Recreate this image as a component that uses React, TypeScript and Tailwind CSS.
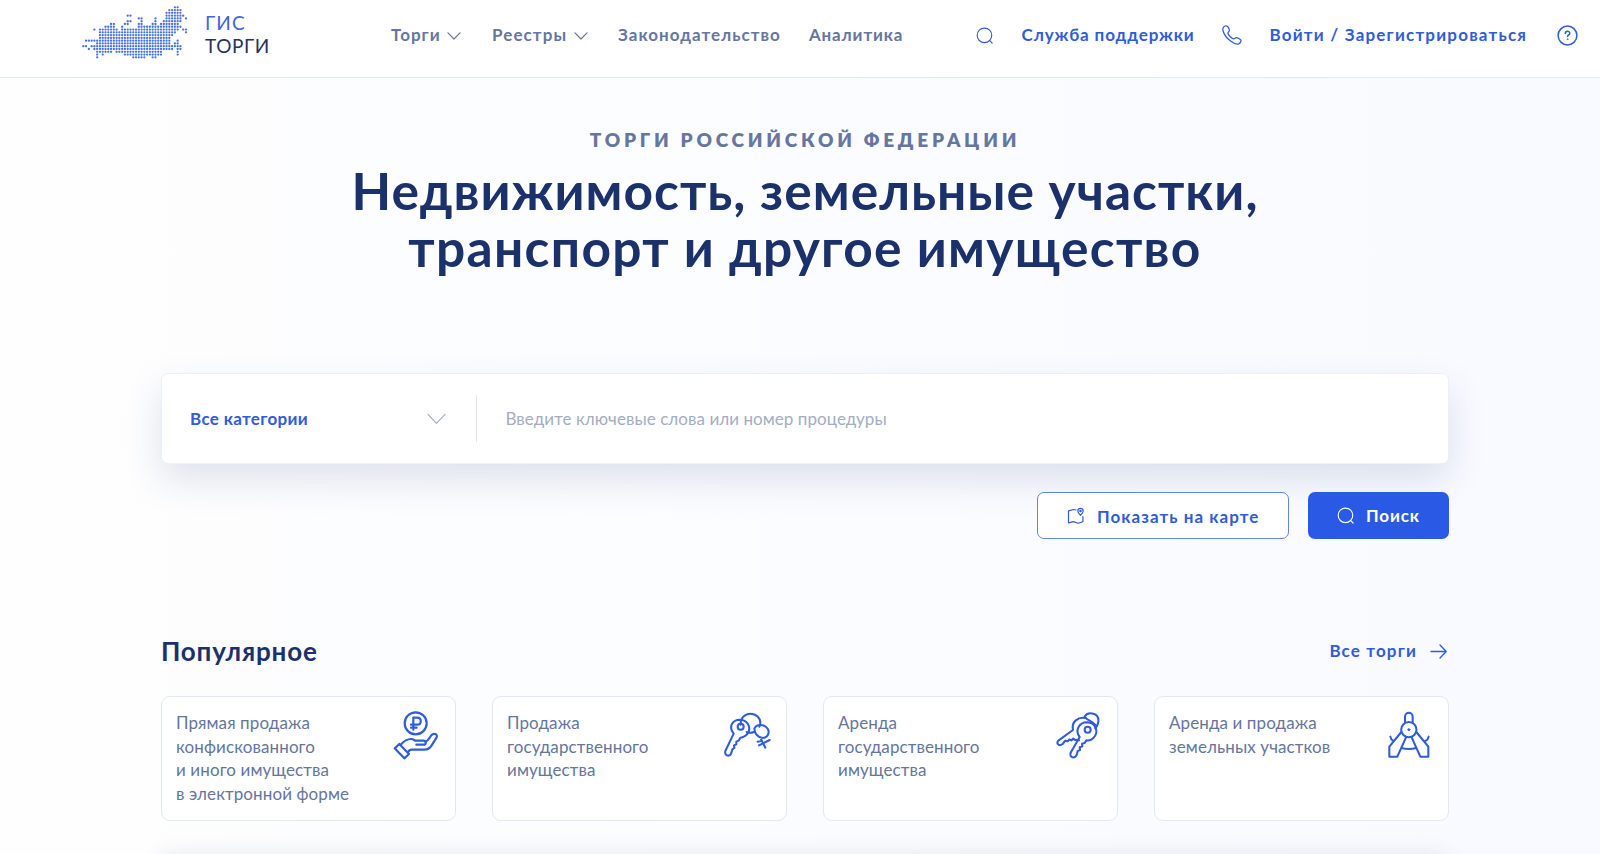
import type { ReactNode } from "react";

const mapRows: [number, number][][] = [
  [[33, 34]],
  [[31, 35]],
  [[30, 35]],
  [[16, 17], [30, 36]],
  [[20, 21], [26, 26], [30, 35], [37, 37]],
  [[16, 17], [21, 21], [26, 26], [29, 35]],
  [[10, 11], [15, 16], [20, 21], [25, 26], [28, 34]],
  [[8, 11], [14, 14], [20, 35]],
  [[4, 4], [6, 12], [14, 34], [36, 37]],
  [[6, 33], [37, 37]],
  [[6, 32]],
  [[6, 31]],
  [[1, 4], [5, 31], [34, 34]],
  [[5, 31], [33, 34]],
  [[0, 1], [3, 35]],
  [[2, 2], [4, 32], [34, 35]],
  [[5, 10], [12, 28], [34, 34]],
  [[5, 5], [7, 7], [15, 28], [34, 34]],
  [[5, 5], [18, 22], [25, 26]],
];

function MapLogo() {
  return (
    <svg className="h-[54px] w-[108px] shrink-0" viewBox="0 0 108 54" fill="#4a6fe0">
      {mapRows.map((ranges, r) =>
        ranges.map(([a, b]) =>
          Array.from({ length: b - a + 1 }, (_, i) => (
            <circle key={`${r}-${a + i}`} cx={2.3 + (a + i) * 2.775} cy={2.3 + r * 2.78} r={1.15} />
          )),
        ),
      )}
    </svg>
  );
}

function Chevron({ className }: { className: string }) {
  return (
    <svg className={className} viewBox="0 0 20 12" fill="none" stroke="currentColor" strokeLinecap="round" strokeLinejoin="round">
      <path d="M1 1.2 10 10.5 19 1.2" />
    </svg>
  );
}

function SearchIcon({ className }: { className: string }) {
  return (
    <svg className={className} viewBox="0 0 18 18" fill="none" stroke="currentColor" strokeWidth="1.15" strokeLinecap="round">
      <circle cx="8.7" cy="8.6" r="7.5" />
      <path d="m14.2 14 2.4 2.6" />
    </svg>
  );
}

function PhoneIcon() {
  return (
    <svg className="h-[20px] w-[20px]" viewBox="0 0 20 20" fill="none" stroke="currentColor" strokeWidth="1.25" strokeLinejoin="round">
      <path d="M1.2 2.7C2 1.2 4.2.2 5.4 1.2c1 .9 1.8 2.6 2 3.9.2 1.5-1.7 1.9-1.5 3.1.3 1.7 3.7 5.3 5.6 5.7 1.2.2 1.8-1.5 3.2-1.3 1.2.2 3.3 1.3 4 2.3.8 1.3-.5 3.2-1.9 3.9-2 .8-5.6-.7-8.2-2.7C5.2 13.5 2 9.4 1.1 6 .8 4.900.7 3.6 1.200 2.700Z" />
    </svg>
  );
}

function HelpIcon() {
  return (
    <svg className="h-[21px] w-[21px]" viewBox="0 0 21 21" fill="none" stroke="currentColor" strokeWidth="1.5" strokeLinecap="round">
      <circle cx="10.5" cy="10.5" r="9.4" />
      <path d="M8.3 8.5c0-3 4.5-2.9 4.5-.2 0 1.6-2.2 1.7-2.2 3.3" />
      <circle cx="10.6" cy="14.2" r=".4" fill="currentColor" strokeWidth="0.7" />
    </svg>
  );
}

function MapPinIcon() {
  return (
    <svg className="h-[18px] w-[18px]" viewBox="0 0 18 18" fill="none" stroke="currentColor" strokeWidth="1.2" strokeLinecap="round" strokeLinejoin="round">
      <path d="M9 3 6.3 2.5 1.5 3.8v12l4.7-1.2 5 1.7 4.7-1.5V9.5" />
      <path d="M13.5 8.4C11.7 6.5 10.8 5.2 10.8 4a2.7 2.7 0 0 1 5.4 0c0 1.2-.9 2.5-2.7 4.400Z" />
      <circle cx="13.5" cy="4" r=".7" />
    </svg>
  );
}

function HandCoinIcon() {
  return (
    <svg className="h-[50px] w-[47px]" viewBox="40 45 141 150" fill="none" stroke="currentColor" strokeWidth="6.5" strokeLinecap="round" strokeLinejoin="round">
      <circle cx="108" cy="85" r="33" />
      <path d="M101 104V68h11c15 0 15 21 0 21H94M94 98h17" />
      <path d="m45 160 14-13 29 30-14 13z" />
      <path d="M63 149c10-11 19-17 31-17 8 0 10 5 15 5h22c10 0 10 12 0 12h-21M137 141c8-3 12-12 18-20 7-8 20-4 16 6l-15 24c-6 10-13 13-23 13h-37c-5 0-9 4-11 8" />
    </svg>
  );
}

function KeyRingIcon() {
  return (
    <svg className="h-[48px] w-[48px]" viewBox="69 95 144 144" fill="none" stroke="currentColor" strokeWidth="6.2" strokeLinecap="round" strokeLinejoin="round">
      <path d="M119 136c-2-18 12-33 29-33s31 13 30 29c0 4-1 7-3 10M158 158c-7 3-14 3-21 0" />
      <path d="M98 163c-14-16-9-42 20-42 29 2 35 35 14 49-6 4-11 5-14 5l-5 9-7 3v8l-7 3 1 8-6 4-2 7c-3 18-23 14-19-2z" />
      <circle cx="119" cy="142" r="9" />
      <path d="M160 148c3-7 10-11 18-11 14 0 24 9 25 20 0 11-8 19-18 19-14-2-24-13-25-28ZM177 174l16 31M170 187l12-3M174 198l32-16" />
    </svg>
  );
}

function TwoKeysIcon() {
  return (
    <svg className="h-[48px] w-[47px]" viewBox="74 63 141 144" fill="none" stroke="currentColor" strokeWidth="6.2" strokeLinecap="round" strokeLinejoin="round">
      <path d="M163 79c12-16 44-10 41 16-1 9-4 15-9 20M166 84c9 8 20 10 29 21" />
      <path d="M146 151c-7-1-9-2-12-1l-5-4-6 5-6-3-5 6-7-2-8 10c-13 9-21-4-12-11l43-31c-6-24 16-41 38-36" />
      <path d="M148 141c-15-19-2-44 22-44 27 1 36 29 20 46-7 7-14 10-22 8l-5 8-8 2 1 8-8 3 1 8-7 3-2 9c-4 17-25 11-19-4z" />
      <circle cx="172" cy="119" r="9" />
    </svg>
  );
}

function CompassIcon() {
  return (
    <svg className="h-[48px] w-[44px]" viewBox="260 245 132 144" fill="none" stroke="currentColor" strokeWidth="6.2" strokeLinecap="round" strokeLinejoin="round">
      <path d="M314 279v-17a11.5 11.5 0 0 1 23 0v17" />
      <circle cx="325.5" cy="301" r="23" />
      <circle cx="325.5" cy="301" r="3" fill="currentColor" strokeWidth="3" />
      <path d="m303 308-36 44v30h24l26-58M348 308l36 44v30h-24l-26-58M303 356c15 4 30 4 45 0M270 322c1 6 4 10 9 12M385 322c-1 6-4 10-9 12" />
    </svg>
  );
}

function Card({ lines, icon, iconBox }: { lines: string[]; icon: ReactNode; iconBox: string }) {
  return (
    <div className="flex h-[125px] w-[295px] justify-between rounded-[9px] border border-[#e3e7f1] bg-white pt-[14px] pl-[14px]">
      <div className="text-[17px] leading-[23.7px] tracking-[0.1px] whitespace-nowrap text-[#65759d]">
        {lines.map((l) => (
          <div key={l}>{l}</div>
        ))}
      </div>
      <div className={iconBox}>{icon}</div>
    </div>
  );
}

export default function App() {
  return (
    <div className="h-[854px] w-[1600px] overflow-hidden bg-gradient-to-r from-[#fefefe] via-[#fbfcff] to-[#f8faff] font-[Lato,'Open_Sans',sans-serif] text-[#2f5cd8]">
      <header className="h-[78px] border-b border-[#e2e7f0] bg-white">
        <div className="flex h-[70px] items-center pl-[81px] text-[17px] font-bold whitespace-nowrap">
          <div className="flex w-[310px] shrink-0 items-center">
            <div className="-mt-[6px]">
              <MapLogo />
            </div>
            <div className="-mt-px ml-[16px] text-[19px] leading-[22.7px] font-normal">
              <div className="tracking-[1.1px] text-[#3c66e0]">ГИС</div>
              <div className="tracking-[0.6px] text-[#26325f]">ТОРГИ</div>
            </div>
          </div>
          <nav className="flex shrink-0 items-center text-[#66769f]">
            <div className="flex w-[101px] items-center">
              <span className="w-[55.5px] tracking-[1px]">Торги</span>
              <Chevron className="mt-[2px] h-[8px] w-[14px] stroke-[1.8]" />
            </div>
            <div className="flex w-[126px] items-center">
              <span className="w-[81.5px] tracking-[1.1px]">Реестры</span>
              <Chevron className="mt-[2px] h-[8px] w-[14px] stroke-[1.8]" />
            </div>
            <span className="w-[191px] tracking-[1px]">Законодательство</span>
            <span className="w-[166.5px] tracking-[0.85px]">Аналитика</span>
          </nav>
          <div className="flex shrink-0 items-center">
            <div className="w-[46px]">
              <SearchIcon className="mt-px h-[17.5px] w-[17.5px]" />
            </div>
            <span className="w-[200.5px] tracking-[0.88px]">Служба поддержки</span>
            <div className="w-[47.5px]">
              <PhoneIcon />
            </div>
            <span className="w-[287.5px] tracking-[1.2px]">Войти / Зарегистрироваться</span>
            <HelpIcon />
          </div>
        </div>
      </header>

      <main className="ml-[161px] w-[1288px] pt-[48px]">
        <div className="text-center text-[19px] leading-[28px] font-extrabold tracking-[3.75px] text-[#66779f]">
          ТОРГИ РОССИЙСКОЙ ФЕДЕРАЦИИ
        </div>
        <h1 className="mt-[8px] text-center text-[51.5px] leading-[57px] font-bold text-[#1b316b]">
          <span className="block tracking-[1.02px]">Недвижимость, земельные участки,</span>
          <span className="block tracking-[1.3px]">транспорт и другое имущество</span>
        </h1>

        <div className="mt-[97px] flex h-[91px] items-center rounded-[7px] border border-[#eceff5] bg-white text-[17px] shadow-[0_16px_36px_rgba(50,75,130,0.15)]">
          <div className="flex h-[47px] w-[315px] items-center justify-between border-r border-[#e2e5ec] pr-[30px] pl-[28px]">
            <span className="font-bold tracking-[0.33px]">Все категории</span>
            <Chevron className="h-[12px] w-[19px] stroke-[1.2] text-[#a3adc4]" />
          </div>
          <span className="pl-[28.5px] tracking-[0.05px] text-[#a3adc4]">Введите ключевые слова или номер процедуры</span>
        </div>

        <div className="mt-[28px] flex justify-end gap-[19px] text-[17px] font-bold">
          <button className="flex h-[47px] w-[252px] items-center rounded-[7px] border-[1.5px] border-[#6285e4] bg-white pl-[29px]">
            <MapPinIcon />
            <span className="mt-[2px] ml-[12px] tracking-[1.05px]">Показать на карте</span>
          </button>
          <button className="flex h-[47px] w-[141px] items-center rounded-[7px] bg-[#2a5ae5] pl-[29px] text-white">
            <SearchIcon className="h-[17.5px] w-[17.5px]" />
            <span className="ml-[11.5px] tracking-[0.85px]">Поиск</span>
          </button>
        </div>

        <div className="mt-[94px] flex h-[36px] items-center justify-between pr-[2px]">
          <h2 className="text-[26px] leading-[36px] font-bold tracking-[0.85px] text-[#1b316b]">Популярное</h2>
          <a className="flex items-center text-[17px] font-bold">
            <span className="tracking-[1.15px]">Все торги</span>
            <svg className="ml-[13px] h-[15px] w-[17px]" viewBox="0 0 17 15" fill="none" stroke="currentColor" strokeWidth="1.3" strokeLinecap="round" strokeLinejoin="round">
              <path d="M1 7.5h15M10 1l6.2 6.5L10 14" />
            </svg>
          </a>
        </div>

        <div className="mt-[27px] flex justify-between">
          <Card
            lines={["Прямая продажа", "конфискованного", "и иного имущества", "в электронной форме"]}
            icon={<HandCoinIcon />}
            iconBox="-mt-px mr-[15px]"
          />
          <Card lines={["Продажа", "государственного", "имущества"]} icon={<KeyRingIcon />} iconBox="mr-[14px]" />
          <Card lines={["Аренда", "государственного", "имущества"]} icon={<TwoKeysIcon />} iconBox="mr-[15px]" />
          <Card lines={["Аренда и продажа", "земельных участков"]} icon={<CompassIcon />} iconBox="mr-[17px]" />
        </div>

        <div className="mt-[37px] h-[60px] rounded-[9px] bg-white shadow-[0_0_24px_rgba(40,50,80,0.14)]" />
      </main>
    </div>
  );
}
